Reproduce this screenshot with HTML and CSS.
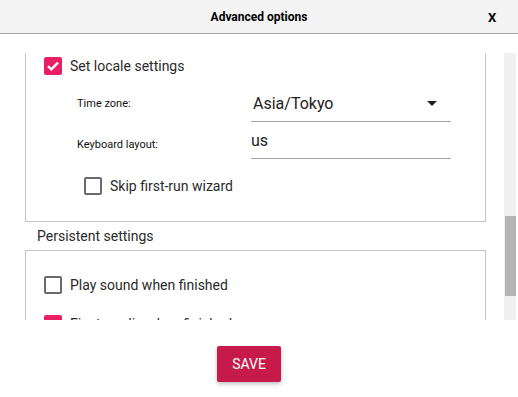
FILE: index.html
```html
<!DOCTYPE html>
<html lang="en">
<head>
  <meta charset="UTF-8">
  <title>Advanced options</title>
  <link rel="stylesheet" href="styles.css">
</head>
<body>
  <div class="dialog">
    <header class="titlebar">
      <span class="title">Advanced options</span>
      <span class="close">X</span>
    </header>

    <div class="scroller">
      <div class="content">
        <!-- locale group, scrolled so its top is out of view -->
        <div class="group group-cut">
          <label class="check-row">
            <span class="box checked">
              <svg viewBox="0 0 18 18" width="18" height="18"><path d="M4 9.2l3.3 3.2L14 5.6" fill="none" stroke="#fff" stroke-width="2.4"/></svg>
            </span>
            <span>Set locale settings</span>
          </label>

          <div class="fields">
            <span class="field-label">Time zone:</span>
            <div class="field select">
              <span>Asia/Tokyo</span>
              <span class="arrow"></span>
            </div>
            <span class="field-label low">Keyboard layout:</span>
            <div class="field">
              <span>us</span>
            </div>
          </div>

          <label class="check-row sub">
            <span class="box"></span>
            <span>Skip first-run wizard</span>
          </label>
        </div>

        <div class="legend">Persistent settings</div>

        <div class="group group-persist">
          <label class="check-row">
            <span class="box"></span>
            <span>Play sound when finished</span>
          </label>
          <label class="check-row">
            <span class="box checked">
              <svg viewBox="0 0 18 18" width="18" height="18"><path d="M4 9.2l3.3 3.2L14 5.6" fill="none" stroke="#fff" stroke-width="2.4"/></svg>
            </span>
            <span>Eject media when finished</span>
          </label>
        </div>
      </div>

      <div class="scrollbar">
        <div class="thumb"></div>
      </div>
    </div>

    <div class="footer">
      <button class="save">SAVE</button>
    </div>
  </div>
</body>
</html>
```

FILE: styles.css
```css
body {
  margin: 0;
  font-family: Roboto, 'Liberation Sans', sans-serif;
  color: #222;
  background: #fff;
}

.dialog {
  width: 518px;
  height: 397px;
  overflow: hidden;
}

.titlebar {
  height: 33px;
  background-color: #f4f4f4;
  border-bottom: 1px solid #a6a6a6;
  display: flex;
  align-items: center;
  justify-content: center;
  position: relative;
  font-weight: bold;
  font-size: 12px;
  color: #000;
}

.close {
  position: absolute;
  left: 488px;
  top: 10px;
  font-size: 13px;
}

.scroller {
  display: flex;
  height: 267px;
  margin-top: 19px;
}

.content {
  width: 461px;
  margin-left: 25px;
  overflow: hidden;
}

.group {
  border: 1px solid #c4c4c4;
  padding-left: 18px;
}

.group-cut {
  border-top: none;
  padding-top: 4px;
  padding-bottom: 26px;
}

.group-persist {
  padding-top: 25px;
  display: flex;
  flex-direction: column;
  gap: 21px;
}

.check-row {
  display: flex;
  align-items: center;
  gap: 8px;
  height: 18px;
  font-size: 14px;
  color: #2a2a2a;
}

.check-row.sub {
  margin-left: 40px;
  margin-top: 18px;
}

.box {
  width: 18px;
  height: 18px;
  box-sizing: border-box;
  border: 2px solid #6b6b6b;
  border-radius: 2px;
  flex: none;
}

.box.checked {
  border: none;
  background-color: #e91e63;
}

.box svg {
  display: block;
}

.fields {
  display: grid;
  grid-template-columns: 174px 200px;
  margin-left: 33px;
  margin-top: 10px;
  align-items: center;
}

.field-label {
  font-size: 11px;
  color: #111;
}

.field-label.low {
  margin-top: 8px;
}

.field {
  height: 36px;
  border-bottom: 1px solid #a0a0a0;
  display: flex;
  align-items: center;
  font-size: 16px;
  color: #222;
}

.select {
  justify-content: space-between;
  padding-left: 2px;
  padding-right: 14px;
}

.arrow {
  width: 0;
  height: 0;
  border-left: 5px solid transparent;
  border-right: 5px solid transparent;
  border-top: 5px solid #222;
}

.legend {
  height: 28px;
  line-height: 28px;
  padding-left: 12px;
  font-size: 14px;
  color: #2a2a2a;
}

.scrollbar {
  width: 12px;
  margin-left: 18px;
  background-color: #f0f0f0;
}

.thumb {
  margin-top: 163px;
  margin-left: 1px;
  height: 80px;
  background-color: #b4b4b4;
}

.footer {
  display: flex;
  justify-content: center;
  padding-right: 20px;
  padding-top: 26px;
}

.save {
  width: 64px;
  height: 36px;
  border: none;
  border-radius: 2px;
  background-color: #c51a4a;
  color: #fff;
  font-family: Roboto, 'Liberation Sans', sans-serif;
  font-size: 14px;
  box-shadow: 0 2px 4px rgba(0, 0, 0, 0.25);
}
```
